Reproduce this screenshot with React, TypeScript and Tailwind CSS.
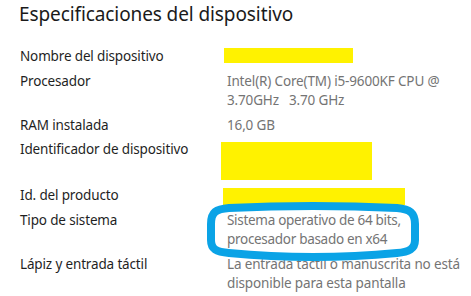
import React from 'react';

type Spec = {
  label: string;
  value?: React.ReactNode;
  redacted?: string; // classes for the yellow box that hides the value
};

const specs: Spec[] = [
  { label: 'Nombre del dispositivo', redacted: 'ml-[3px] mt-[1px] w-[129px] h-[15px]' },
  {
    label: 'Procesador',
    value: (
      <>
        Intel(R) Core(TM) i5-9600KF CPU @
        <br />
        <span className="whitespace-pre">3.70GHz   3.70 GHz</span>
      </>
    ),
  },
  { label: 'RAM instalada', value: '16,0 GB' },
  { label: 'Identificador de dispositivo', redacted: 'ml-0 mt-[2px] w-[151px] h-[38px]' },
  { label: 'Id. del producto', redacted: 'ml-[2px] mt-[2px] w-[182px] h-[17px]' },
  {
    label: 'Tipo de sistema',
    value: (
      <span className="tracking-[-0.3px]">
        Sistema operativo de 64 bits,
        <br />
        procesador basado en x64
      </span>
    ),
  },
  {
    label: 'Lápiz y entrada táctil',
    value: (
      <>
        La entrada táctil o manuscrita no está
        <br />
        disponible para esta pantalla
      </>
    ),
  },
];

export default function App() {
  return (
    <div
      className="relative w-[471px] h-[296px] overflow-hidden bg-white"
      style={{ fontFamily: '"Noto Sans", "Open Sans", sans-serif' }}
    >
      <h1 className="pl-[19px] text-[19px] tracking-[-0.1px] leading-[28px] text-[#1a1a1a] font-normal">
        Especificaciones del dispositivo
      </h1>

      <div className="mt-[19px] flex flex-col gap-[5.8px] text-[13.5px] tracking-[-0.15px] leading-[19px]">
        {specs.map((s) => (
          <div key={s.label} className="grid grid-cols-[201px_1fr] pl-[20px]">
            <div className="text-[#1f1f1f] whitespace-nowrap">{s.label}</div>
            <div>
              {s.redacted ? (
                <div className={`bg-[#fff200] ${s.redacted}`} />
              ) : (
                <div className="pl-[6px] text-[#747474] whitespace-nowrap">{s.value}</div>
              )}
            </div>
          </div>
        ))}
      </div>

      {/* hand-drawn highlight around the system type */}
      <svg
        className="absolute left-[207px] top-[202px]"
        width="212"
        height="61"
        viewBox="0 0 212 61"
        fill="none"
      >
        <path
          d="M4 22 C4 10 9 7 22 6 Q106 2 190 6 C203 7 208 11 208 22 L208 38 C208 47 202 50 190 51 Q106 59 22 51 C9 50 4 47 4 38 Z"
          stroke="#0aa3e6"
          strokeWidth="8"
        />
      </svg>
    </div>
  );
}
